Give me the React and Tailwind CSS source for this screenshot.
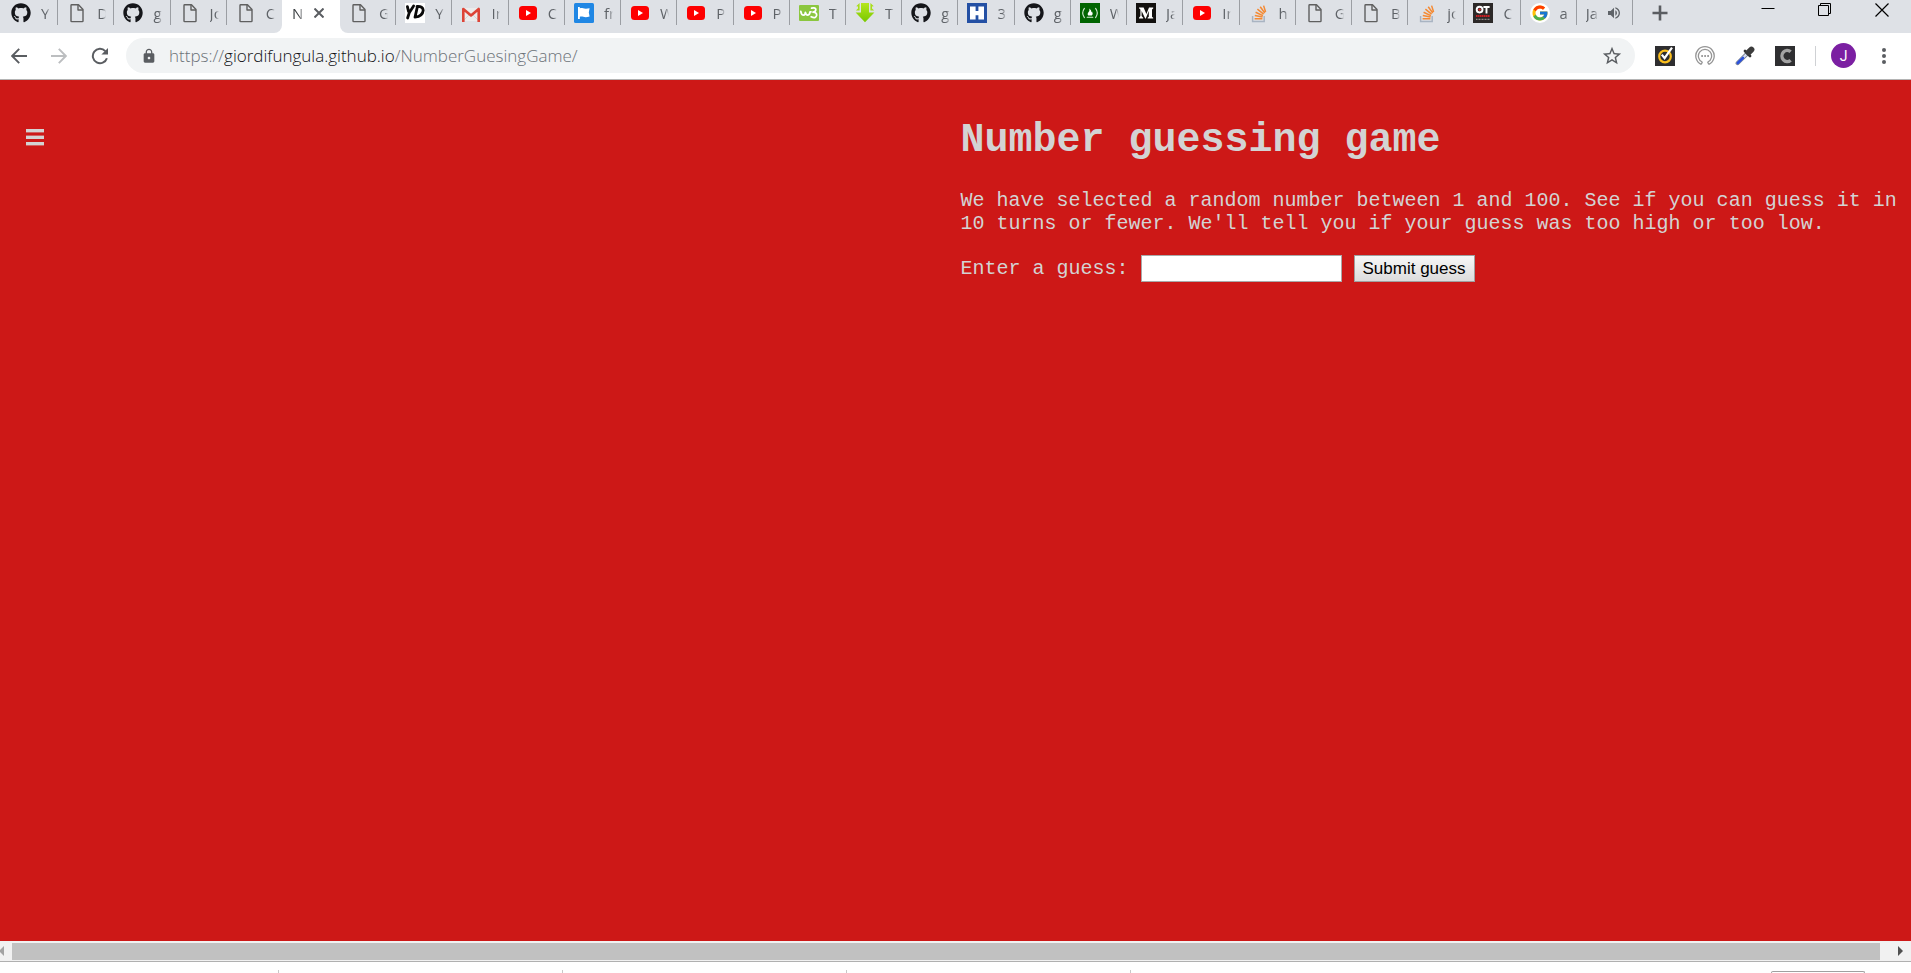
import React from "react";
import { FaGithub } from "react-icons/fa";
import { FcGoogle } from "react-icons/fc";
import { MdStarBorder, MdLock, MdVolumeUp } from "react-icons/md";

const Github = () => <FaGithub className="size-5 text-[#15161a]" />;

const Page = () => (
  <svg viewBox="0 0 20 20" className="size-5" fill="none" stroke="#5f5f5f" strokeWidth="1.4" strokeLinejoin="round">
    <path d="M4 4.2 Q4 3.5 4.7 3.5 H11.5 L16 8.2 V19.6 Q16 20.3 15.3 20.3 H4.7 Q4 20.3 4 19.6Z" transform="translate(0 -1.7)" />
    <path d="M11 2 V7 H16" />
  </svg>
);

const YD = () => (
  <svg viewBox="0 0 20 20" className="size-5">
    <rect width="20" height="20" fill="#fff" />
    <g fill="none" stroke="#0a0a0a" strokeWidth="2.8" strokeLinecap="round" strokeLinejoin="round">
      <path d="M2.4 3.6 L3.6 8.6 M8.6 3 L4.4 9.4 L2.6 15" />
      <path d="M12.4 3.6 L10 14.2 Q17.6 13.4 18.2 7.4 Q18 3 12 3.4" />
    </g>
  </svg>
);

const Gmail = () => (
  <svg viewBox="0 0 20 20" className="size-5">
    <rect x="2" y="5" width="16" height="13" fill="#ececec" />
    <path d="M2 18 L8 12 M18 18 L12 12" stroke="#d5d5d5" strokeWidth="1" />
    <path d="M2.3 19 V6 L10 12.4 L17.7 6 V19" fill="none" stroke="#dd4437" strokeWidth="2.6" strokeLinejoin="round" />
  </svg>
);

const Youtube = () => (
  <svg viewBox="0 0 20 20" className="size-5">
    <rect x="1" y="3" width="18" height="14" rx="3.5" fill="#fe0000" />
    <path d="M8 7 L13 10 L8 13Z" fill="#fff" />
  </svg>
);

const Flag = () => (
  <svg viewBox="0 0 20 20" className="size-5">
    <rect width="20" height="20" rx="1.5" fill="#2087e4" />
    <path d="M4 4 H5.8 V5.4 C8 4 9.2 6.6 15.6 5.2 L14.8 9.4 L15.6 13.6 C10 15.2 9 13 5.8 13.8 V16 H4Z" fill="#fff" />
  </svg>
);

const W3 = () => (
  <svg viewBox="0 0 20 20" className="size-5">
    <rect y="2" width="20" height="16" rx="1" fill="#8bc63f" />
    <g fill="none" stroke="#fff" strokeWidth="1.8" strokeLinecap="round" strokeLinejoin="round">
      <path d="M1.8 8.4 Q2.4 12.2 4.6 12.2 Q6.2 12 6.4 9.4 Q7 12.2 8.8 12.2 Q10.8 12 11 8.8 H12" />
      <path d="M12.6 5.2 Q17 4.2 16.8 6.8 Q16.6 9 14 9.2 Q18 9.4 17.6 12.4 Q16.8 16 12.2 13.8" />
    </g>
  </svg>
);

const Download = () => (
  <svg viewBox="0 0 20 20" className="size-5">
    <defs>
      <linearGradient id="down" x1="0" y1="0" x2="0" y2="1">
        <stop offset="0" stopColor="#b6e61e" />
        <stop offset="1" stopColor="#78c800" />
      </linearGradient>
    </defs>
    <path d="M6 0 H14 V9.4 H19.4 L10 19.2 L.6 9.4 H6Z" fill="url(#down)" />
    <path d="M4.6 0 V7.6 H.8 L3 5.4 V3.4 L1.2 3.2Z M15.4 0 V7.6 H19.2 L17 5.4 V3.4 L18.8 3.2Z" fill="#a8de1a" />
  </svg>
);

const H = () => (
  <svg viewBox="0 0 20 20" className="size-5">
    <rect width="20" height="20" fill="#2450a4" />
    <path d="M3 3.6 H8.6 V8 H11.4 V3.6 H17 V16.6 H11.4 V12.2 H8.6 V16.6 H3Z" fill="#fff" />
  </svg>
);

const Fire = () => (
  <svg viewBox="0 0 20 20" className="size-5">
    <rect width="20" height="20" fill="#006400" />
    <g fill="none" stroke="#d8ecd8" strokeWidth="1.1" strokeLinecap="round">
      <path d="M4.4 5.4 Q1 10 4.4 14.6 M15.6 5.4 Q19 10 15.6 14.6 M7.2 14.2 H12.8" />
    </g>
    <path d="M9.4 5.4 Q11.8 7.4 11.4 9.2 Q12 9 12 8.2 Q13.4 10.8 11.8 12.6 H8.2 Q6.8 11 8.4 9.2 Q9.8 7.6 9.4 5.4Z" fill="#fff" />
  </svg>
);

const Medium = () => (
  <svg viewBox="0 0 20 20" className="size-5">
    <rect width="20" height="20" fill="#12100e" />
    <path d="M3 4.6 H7.6 L10.4 11 L13 4.6 H17.2 V5.4 L16 6.4 V13.8 L17.2 14.8 V15.6 H11.6 V14.8 L12.8 13.8 V8 L9.8 15.6 H9.2 L5.6 8 V13 L7.2 14.8 V15.6 H3 V14.8 L4.4 13 V6.6 L3 5.2Z" fill="#fff" />
  </svg>
);

const Stack = () => (
  <svg viewBox="0 0 20 20" className="size-5" fill="none">
    <path d="M3.6 13 V18.4 H15.2 V13" stroke="#a9b4c2" strokeWidth="1.5" />
    <g stroke="#f48a34" strokeWidth="1.5">
      <path d="M5.6 15.8 H13.4 M5.8 12.4 L13.6 14 M6.6 9.2 L13.9 12.6 M8.4 6.2 L14.6 11.2 M11.2 3.8 L15.8 10 M14.6 2.6 L16.6 9" />
    </g>
  </svg>
);

const OT = () => (
  <svg viewBox="0 0 20 20" className="size-5">
    <rect width="20" height="20" fill="#2c2928" />
    <g fill="none" stroke="#fff" strokeWidth="1.9">
      <circle cx="6.6" cy="6.6" r="2.9" />
      <path d="M10.4 4 H16.6 M13.5 4 V10.4" />
    </g>
    <circle cx="6.6" cy="6.6" r="1.2" fill="#e02828" />
    <path d="M3 13 H17" stroke="#c81e22" strokeWidth="2" strokeDasharray="1.6 .4" />
    <path d="M3 16.4 H17" stroke="#8d8a88" strokeWidth="1.4" strokeDasharray="1 .5" />
  </svg>
);

const Google = () => (
  <span className="flex size-5 items-center justify-center rounded-full bg-white">
    <FcGoogle className="size-[18px]" />
  </span>
);

const leftTabs = [
  [Github, "Y"],
  [Page, "D"],
  [Github, "g"],
  [Page, "Jo"],
  [Page, "C"],
];

const rightTabs = [
  [Page, "G"],
  [YD, "Y"],
  [Gmail, "In"],
  [Youtube, "C"],
  [Flag, "fr"],
  [Youtube, "W"],
  [Youtube, "P"],
  [Youtube, "P"],
  [W3, "T"],
  [Download, "T"],
  [Github, "g"],
  [H, "3"],
  [Github, "g"],
  [Fire, "W"],
  [Medium, "Ja"],
  [Youtube, "In"],
  [Stack, "h"],
  [Page, "G"],
  [Page, "B"],
  [Stack, "jo"],
  [OT, "C"],
  [Google, "a"],
];

const fade = "[mask-image:linear-gradient(to_right,black_60%,transparent)]";

function Tab({ icon: Icon, label, last }) {
  return (
    <button
      className={`flex h-[25px] min-w-0 flex-1 items-center gap-2.5 pl-[9px] ${last ? "" : "border-r border-[#9b9ea3]"}`}
    >
      <span className="shrink-0">
        <Icon />
      </span>
      <span className={`w-[9px] overflow-hidden whitespace-nowrap text-left ${fade}`}>{label}</span>
    </button>
  );
}

function TabStrip() {
  return (
    <div className="flex h-[33px] bg-white text-[15px] leading-5 text-[#5f6368]">
      <div className="flex w-[282px] shrink-0 rounded-br-lg bg-[#dee1e6] pl-0.5">
        {leftTabs.map(([icon, label], i) => (
          <Tab key={i} icon={icon} label={label} last={i === leftTabs.length - 1} />
        ))}
      </div>
      <div className="flex h-[25px] w-[58px] shrink-0 items-center gap-2.5 pl-[10px] text-[#3c4043]">
        <span className={`w-3 overflow-hidden whitespace-nowrap ${fade}`}>N</span>
        <button aria-label="Close tab">
          <svg viewBox="0 0 10 10" className="size-2.5" stroke="#5a5d61" strokeWidth="2">
            <path d="M.5 .5 L9.5 9.5 M9.5 .5 L.5 9.5" />
          </svg>
        </button>
      </div>
      <div className="flex min-w-0 flex-1 justify-between rounded-bl-lg bg-[#dee1e6]">
        <div className="flex">
          <div className="flex w-[1293px]">
            {rightTabs.map(([icon, label], i) => (
              <Tab key={i} icon={icon} label={label} />
            ))}
            <button className="flex h-[25px] min-w-0 flex-1 items-center gap-2 border-r border-[#9b9ea3] pl-[9px]">
              <span className={`w-3 overflow-hidden whitespace-nowrap text-left ${fade}`}>Ja</span>
              <MdVolumeUp className="size-4 shrink-0" />
            </button>
          </div>
          <button aria-label="New tab" className="flex h-[25px] w-[54px] items-center justify-center">
            <svg viewBox="0 0 16 16" className="size-4" stroke="#5a5d61" strokeWidth="2.6">
              <path d="M.5 8 H15.5 M8 .5 V15.5" />
            </svg>
          </button>
        </div>
        <div className="flex h-5 items-center gap-[43px] pr-[22px]">
          <button aria-label="Minimize">
            <svg viewBox="0 0 14 14" className="size-3.5" stroke="#000"><path d="M.5 5.5 H13.5" /></svg>
          </button>
          <button aria-label="Restore">
            <svg viewBox="0 0 14 14" className="size-3.5" stroke="#000" fill="none">
              <path d="M.5 2.5 H10.5 V12.5 H.5Z M2.5 2.5 V.5 H12.5 V10.5 H10.5" />
            </svg>
          </button>
          <button aria-label="Close window">
            <svg viewBox="0 0 14 14" className="size-3.5" stroke="#000" strokeWidth="1.2"><path d="M.5 .5 L13.5 13.5 M13.5 .5 L.5 13.5" /></svg>
          </button>
        </div>
      </div>
    </div>
  );
}

function Arrow({ className }) {
  return (
    <svg viewBox="0 0 16 16" className={`size-4 ${className}`} fill="none" stroke="currentColor" strokeWidth="1.9">
      <path d="M16 8 H1.5 M8.2 .9 L1.2 8 L8.2 15.1" />
    </svg>
  );
}

function Toolbar() {
  return (
    <div className="flex h-[47px] items-center border-b border-[#b4b4b4] bg-white pl-[11px] pr-[21px] pb-px text-[#5a5d61]">
      <div className="flex items-center gap-6">
        <button aria-label="Back"><Arrow className="" /></button>
        <button aria-label="Forward"><Arrow className="rotate-180 text-[#bcbec0]" /></button>
        <button aria-label="Reload">
          <svg viewBox="0 0 18 18" className="size-[18px]" fill="none" stroke="currentColor" strokeWidth="2">
            <path d="M15.9 11.2 A7.2 7.2 0 1 1 14.3 4.1" />
            <path d="M17 1 V7.6 H10.4Z" fill="currentColor" stroke="none" />
          </svg>
        </button>
      </div>
      <div className="ml-[17px] flex h-[35px] min-w-0 flex-1 items-center rounded-full bg-[#f1f3f4] pl-[15px] pr-3">
        <MdLock className="size-4 shrink-0" />
        <div
          role="textbox"
          aria-label="Address"
          tabIndex={0}
          className="ml-3 flex-1 whitespace-nowrap text-[17px] font-light leading-6 text-[#6c7278]"
        >
          https://<span className="text-[#101114]">giordifungula.github.io</span>/NumberGuesingGame/
        </div>
        <button aria-label="Bookmark"><MdStarBorder className="size-[22px]" /></button>
      </div>
      <div className="ml-5 flex items-center gap-5">
        <button aria-label="Norton">
          <svg viewBox="0 0 20 20" className="size-5" fill="none">
            <rect width="20" height="20" fill="#2e2e30" />
            <circle cx="10" cy="10.5" r="5.8" stroke="#fbbf1e" strokeWidth="2.2" />
            <path d="M6.8 8.6 L9.6 12.2 L17 1.6" stroke="#fff" strokeWidth="2.2" />
          </svg>
        </button>
        <button aria-label="Feedback">
          <svg viewBox="0 0 20 20" className="size-5" fill="none" stroke="#959595" strokeWidth="1.3">
            <path d="M6.2 18.3 A9.2 9.2 0 1 1 13.8 18.3 M7.2 16 A6.6 6.6 0 1 1 12.8 16 M6.2 18.6 L7.4 15.8 M13.8 18.6 L12.6 15.8" />
            <path d="M6.3 10 H14" strokeDasharray="1.6 1.4" strokeWidth="1.8" />
          </svg>
        </button>
        <button aria-label="Color picker">
          <svg viewBox="0 0 20 20" className="size-5" fill="none" strokeLinecap="round">
            <path d="M2.6 17.2 L11.8 8" stroke="#77808f" strokeWidth="4" />
            <path d="M2.8 17 L11.8 8" stroke="#d5dcf0" strokeWidth="2.4" />
            <path d="M2.8 17 L8 11.8" stroke="#2b52dc" strokeWidth="2.6" />
            <path d="M10 5 L15 10" stroke="#333" strokeWidth="2.8" />
            <path d="M13.6 6.4 L16.4 3.6" stroke="#3c3c3c" strokeWidth="6" />
          </svg>
        </button>
        <button aria-label="Capture">
          <svg viewBox="0 0 20 20" className="size-5" fill="none">
            <rect width="20" height="20" fill="#2f2f31" />
            <path d="M15.6 5.8 A5.2 5.6 0 1 0 15.6 14.2" stroke="#a3a3a3" strokeWidth="3.4" />
          </svg>
        </button>
        <span className="h-5 w-px bg-[#cfd1d4]" />
      </div>
      <button aria-label="Profile" className="ml-[15px] flex size-[25px] items-center justify-center rounded-full bg-[#7b1fa2] font-['Roboto',sans-serif] text-sm text-white">
        J
      </button>
      <button aria-label="Menu" className="ml-[22px]">
        <svg viewBox="0 0 12 18" className="h-[18px] w-3" fill="#5a5d61">
          <circle cx="6" cy="3" r="2" /><circle cx="6" cy="9" r="2" /><circle cx="6" cy="15" r="2" />
        </svg>
      </button>
    </div>
  );
}

function Game() {
  return (
    <main className="grid flex-1 grid-cols-2 content-start bg-[#cd1817] font-['Courier_New','Liberation_Mono',monospace] text-xl leading-[23px] text-[#d3d3d3]">
      <div className="pl-[26px] pt-[49px]">
        <button aria-label="Open menu" className="block">
          <svg viewBox="0 0 18 17" className="h-[17px] w-[18px]" fill="#d3d3d3">
            <rect y="0" width="18" height="3.4" /><rect y="6.6" width="18" height="3.4" /><rect y="13" width="18" height="3.4" />
          </svg>
        </button>
      </div>
      <div className="pl-[5px] pr-3 pt-[38px]">
        <h1 className="text-[40px] font-bold leading-[46px]">Number guessing game</h1>
        <p className="mt-[25px]">
          We have selected a random number between 1 and 100. See if you can guess it in 10 turns or fewer. We'll tell you if your guess was too high or too low.
        </p>
        <form className="mt-5 flex items-center gap-3" onSubmit={(e) => e.preventDefault()}>
          <label htmlFor="guess">Enter a guess:</label>
          <input id="guess" type="text" className="h-[27px] w-[201px] border border-[#a9a9a9] bg-white px-1 text-black" />
          <button className="h-[27px] border border-[#a0a0a0] bg-linear-to-b from-[#f7f7f7] to-[#dcdcdc] px-2 font-['Liberation_Sans',sans-serif] text-[17px] leading-5 text-black">
            Submit guess
          </button>
        </form>
      </div>
    </main>
  );
}

function ScrollBar() {
  return (
    <div className="flex h-[21px] items-center border-b border-[#b0b0b0] bg-[#f1f1f1]">
      <svg viewBox="0 0 12 10" className="h-2.5 w-3" fill="#a3a3a3"><path d="M4 0 V10 L-1 5Z" /></svg>
      <div className="h-[17px] flex-1 bg-[#c1c1c1]" />
      <svg viewBox="0 0 31 10" className="h-2.5 w-[31px]" fill="#505050"><path d="M18 0 L23 5 L18 10Z" /></svg>
    </div>
  );
}

function Shelf() {
  return (
    <div className="flex h-[11px] items-end justify-between overflow-hidden bg-white">
      <div className="flex">
        <div className="h-[3px] w-[279px] border-r border-[#c8c8c8]" />
        <div className="h-[3px] w-[284px] border-r border-[#c8c8c8]" />
        <div className="h-[3px] w-[284px] border-r border-[#c8c8c8]" />
        <div className="h-[3px] w-[284px] border-r border-[#c8c8c8]" />
      </div>
      <div className="mr-[46px] h-0.5 w-[94px] rounded-t-sm border-x border-t border-[#a0a0a0]" />
    </div>
  );
}

export default function App() {
  return (
    <div className="flex min-h-screen flex-col font-['Open_Sans',sans-serif]">
      <TabStrip />
      <Toolbar />
      <Game />
      <ScrollBar />
      <Shelf />
    </div>
  );
}
